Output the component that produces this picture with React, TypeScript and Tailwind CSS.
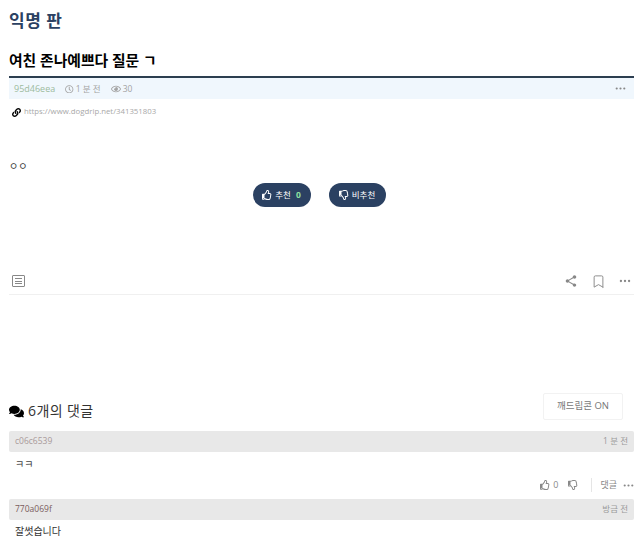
import { Bookmark, Ellipsis } from 'lucide-react';
import { FaComments, FaLink, FaRegClock, FaRegEye, FaRegThumbsDown, FaRegThumbsUp } from 'react-icons/fa';
import { MdShare } from 'react-icons/md';

const font = { fontFamily: '"Open Sans", "Noto Sans CJK KR", sans-serif' };

function CommentHead({ name, time, nameColor }: { name: string; time: string; nameColor: string }) {
  return (
    <div className="flex h-[21px] items-center justify-between rounded-[2px] bg-[#e8e8e8] pl-[6px] pr-[6px] text-[8.5px]">
      <span className={nameColor}>{name}</span>
      <span className="text-[#9a9a9a]">{time}</span>
    </div>
  );
}

export default function App() {
  return (
    <div className="h-[540px] w-[640px] overflow-hidden bg-white pl-[9px] pr-[6px] pt-[9px]" style={font}>
      <h1 className="h-[23px] text-[17px] font-semibold leading-[23px] tracking-[0.5px] text-[#2b4162]">익명 판</h1>

      <h2 className="mt-[18px] h-[26px] text-[14.8px] font-semibold leading-[20px] text-black">여친 존나예쁘다 질문 ㄱ</h2>

      <div className="flex h-[23px] items-center justify-between border-t-[2px] border-[#2c3e50] bg-[#f0f7fd] pl-[5px] pr-[7px] text-[8.5px] text-[#a3a3a3]">
        <div className="flex items-center pt-[1px]">
          <span className="text-[9px] text-[#9dbb9d]">95d46eea</span>
          <FaRegClock className="ml-[10px] h-[8.5px] w-[8.5px]" />
          <span className="ml-[2px]">1 분 전</span>
          <FaRegEye className="ml-[10px] h-[10px] w-[10px]" />
          <span className="ml-[2px]">30</span>
        </div>
        <Ellipsis className="h-[13px] w-[13px] text-[#888]" />
      </div>

      <div className="mt-[6px] flex h-[14px] items-center pl-[3px] text-[7.8px] text-[#a8a8a8]">
        <FaLink className="h-[9px] w-[9px] text-black" />
        <span className="ml-[3px]">https://www.dogdrip.net/341351803</span>
      </div>

      <p className="mt-[37px] h-[20px] text-[10px] leading-[20px] text-[#333]">ㅇㅇ</p>

      <div className="mt-[7px] flex justify-center gap-[18px] pr-[5px]">
        <button className="flex h-[24px] w-[58px] items-center justify-center gap-[3px] rounded-full bg-[#2b4162] text-[8.5px] text-white">
          <FaRegThumbsUp className="h-[10px] w-[10px]" />
          <span>추천</span>
          <span className="ml-[2px] font-bold text-[#8fe0a0]">0</span>
        </button>
        <button className="flex h-[24px] w-[57px] items-center justify-center gap-[3px] rounded-full bg-[#2b4162] text-[8.5px] text-white">
          <FaRegThumbsDown className="h-[10px] w-[10px]" />
          <span>비추천</span>
        </button>
      </div>

      <div className="mt-[64px] flex h-[24px] items-center justify-between border-b border-[#f0f0f0] pb-[3px] pl-[3px] pr-[2px]">
        <div className="flex h-[12px] w-[13px] flex-col justify-center gap-[1.5px] rounded-[1px] border border-[#888] px-[2px]">
          <span className="h-px bg-[#888]" />
          <span className="h-px bg-[#888]" />
          <span className="h-px bg-[#888]" />
        </div>
        <div className="flex items-center text-[#888]">
          <MdShare className="h-[14px] w-[14px]" />
          <Bookmark className="ml-[13px] h-[15px] w-[15px]" strokeWidth={1.5} />
          <Ellipsis className="ml-[12px] h-[14px] w-[14px]" />
        </div>
      </div>

      <div className="mt-[97px] flex h-[28px] items-end justify-between pr-[11px]">
        <div className="flex items-center">
          <FaComments className="h-[15px] w-[15px] text-black" />
          <span className="ml-[4px] text-[14px] leading-[18px] tracking-[0.4px] text-[#333]">6개의 댓글</span>
        </div>
        <button className="h-[27px] w-[80px] rounded-[2px] border border-[#f2f2f2] text-[9.5px] text-[#777]">깨드립콘 ON</button>
      </div>

      <div className="mt-[11px]">
        <CommentHead name="c06c6539" time="1 분 전" nameColor="text-[#a89a9a]" />
        <p className="mt-[5px] h-[14px] pl-[6px] text-[10px] leading-[14px] text-[#444]">ㅋㅋ</p>
        <div className="-mr-[1px] mt-[6px] flex h-[16px] items-center justify-end text-[9px] text-[#888]">
          <FaRegThumbsUp className="h-[10px] w-[10px]" />
          <span className="ml-[3px]">0</span>
          <FaRegThumbsDown className="ml-[10px] h-[10px] w-[10px]" />
          <span className="ml-[13px] h-[14px] border-l border-[#e5e5e5]" />
          <span className="ml-[8px]">댓글</span>
          <Ellipsis className="ml-[5px] h-[13px] w-[13px]" />
        </div>
        <div className="mt-[6px]">
          <CommentHead name="770a069f" time="방금 전" nameColor="text-[#7a5c5c]" />
        </div>
        <p className="mt-[4px] pl-[6px] text-[10px] leading-[14px] text-[#333]">잘썻습니다</p>
      </div>
    </div>
  );
}
